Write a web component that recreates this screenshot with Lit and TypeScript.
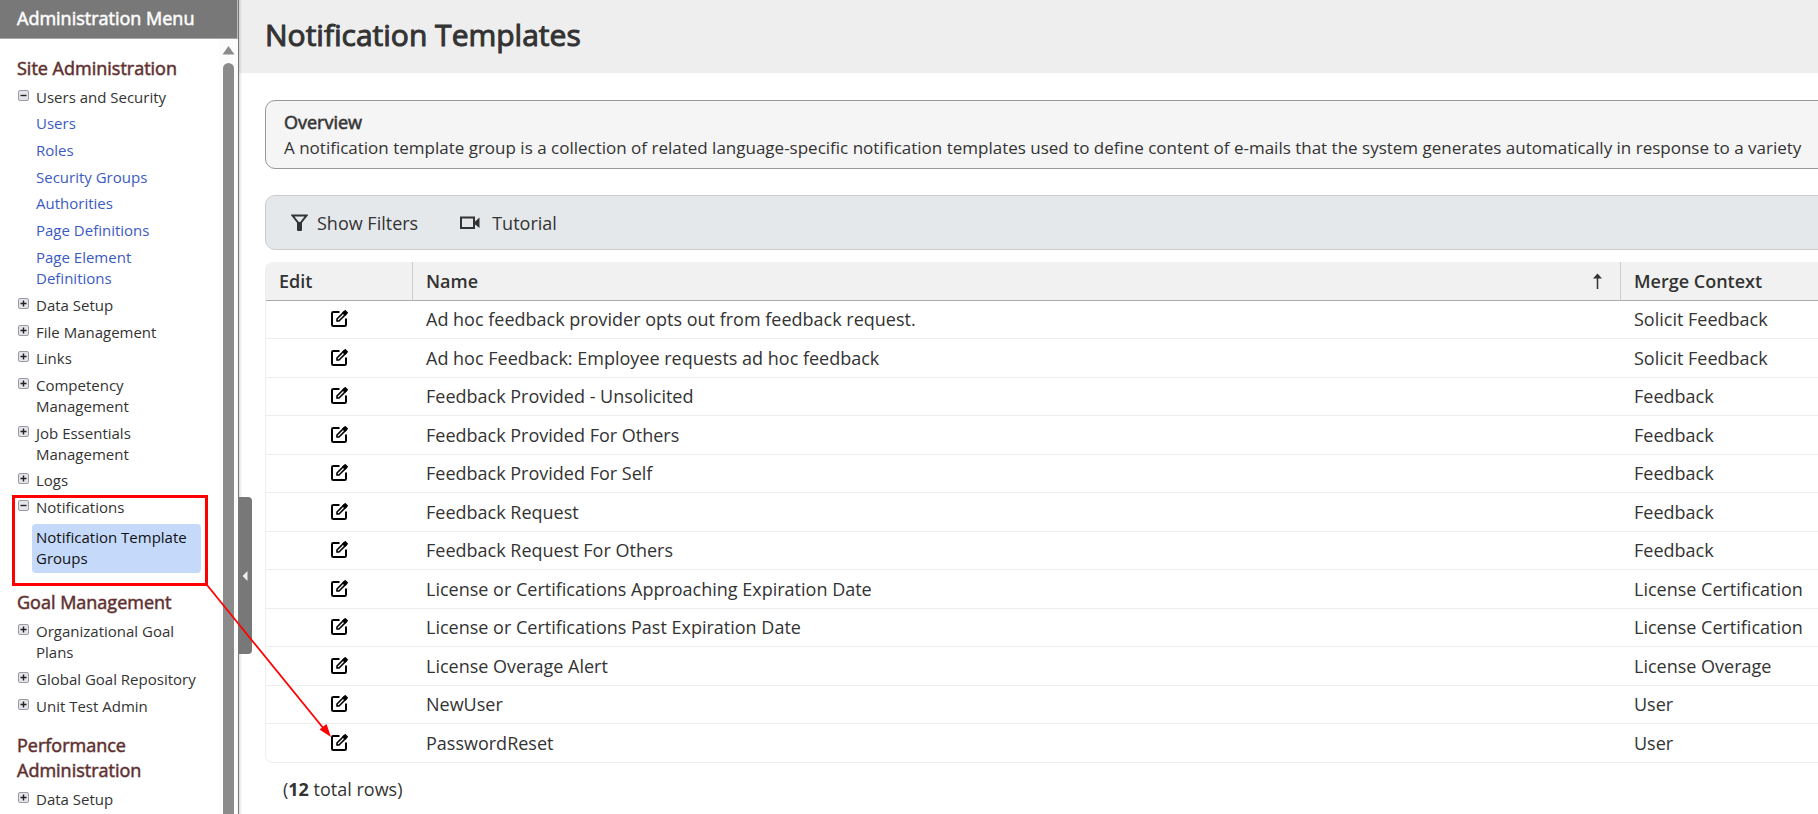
import { LitElement, html, css, svg } from "lit";
import { customElement } from "lit/decorators.js";

interface MenuItem { label: string; open?: boolean; links?: string[]; current?: string; }
interface MenuSection { title: string; items: MenuItem[]; }

const MENU: MenuSection[] = [
  {
    title: "Site Administration",
    items: [
      {
        label: "Users and Security",
        open: true,
        links: ["Users", "Roles", "Security Groups", "Authorities", "Page Definitions", "Page Element Definitions"],
      },
      { label: "Data Setup" },
      { label: "File Management" },
      { label: "Links" },
      { label: "Competency Management" },
      { label: "Job Essentials Management" },
      { label: "Logs" },
      { label: "Notifications", open: true, links: ["Notification Template Groups"], current: "Notification Template Groups" },
    ],
  },
  {
    title: "Goal Management",
    items: [{ label: "Organizational Goal Plans" }, { label: "Global Goal Repository" }, { label: "Unit Test Admin" }],
  },
  { title: "Performance Administration", items: [{ label: "Data Setup" }] },
];

const ROWS: [string, string][] = [
  ["Ad hoc feedback provider opts out from feedback request.", "Solicit Feedback"],
  ["Ad hoc Feedback: Employee requests ad hoc feedback", "Solicit Feedback"],
  ["Feedback Provided - Unsolicited", "Feedback"],
  ["Feedback Provided For Others", "Feedback"],
  ["Feedback Provided For Self", "Feedback"],
  ["Feedback Request", "Feedback"],
  ["Feedback Request For Others", "Feedback"],
  ["License or Certifications Approaching Expiration Date", "License Certification"],
  ["License or Certifications Past Expiration Date", "License Certification"],
  ["License Overage Alert", "License Overage"],
  ["NewUser", "User"],
  ["PasswordReset", "User"],
];

@customElement("admin-menu")
export class AdminMenu extends LitElement {
  static styles = css`
    :host { display: flex; flex-direction: column; min-height: 0; background: #fff; border-right: 1px solid #777; }
    .bar {
      flex: none; height: 39px; box-sizing: border-box; padding: 7px 17px; line-height: 22px;
      background: #787878; color: #fff; font-size: 18px; font-weight: 400; margin: 0;
      border-bottom: 1px solid #a8a8a8; border-right: 1px solid #bbb; -webkit-text-stroke: 1px #ffffff99;
    }
    .body { flex: 1; min-height: 0; display: flex; overflow: hidden; }
    nav { flex: 1; min-width: 0; padding: 17px 14px 0 17px; overflow: hidden; }
    .track { flex: none; width: 19px; padding-top: 7px; display: flex; flex-direction: column; align-items: center; background: #fcfcfc; }
    .track svg { display: block; flex: none; }
    .thumb { width: 11px; flex: 1; margin-top: 8px; border-radius: 6px 6px 0 0; background: #8b8b8b; }
    h2 { margin: 0 0 3px; font-size: 18px; font-weight: 400; line-height: 25px; color: #5c2e2e; -webkit-text-stroke: 1px #5c2e2e88; }
    section + section { padding-top: 14px; }
    ul { list-style: none; margin: 0; padding: 0; }
    .toggle {
      display: grid; grid-template-columns: 12px 1fr; column-gap: 7px; width: 100%; text-align: left;
      border: 0; background: none; padding: 3px 0; font: inherit; color: inherit; line-height: 21px; cursor: pointer;
    }
    .toggle svg { margin: 3px 0 0 1px; }
    .sub { padding: 0 4px 0 15px; }
    a { display: block; padding: 2px 4px 4px; color: #3b5bc4; text-decoration: none; }
    li:nth-child(3n) > .toggle { padding-bottom: 2px; }
    li:nth-child(3n) > a { padding-bottom: 3px; }
    .current { background: #c5dafa; color: #111; border-radius: 4px; margin: 3px 0; padding-top: 3px; }
  `;

  render() {
    return html`
      <h1 class="bar">Administration Menu</h1>
      <div class="body">
        <nav aria-label="Administration">
          ${MENU.map((s) => html`<section>
            <h2>${s.title}</h2>
            <ul>${s.items.map((i) => this.item(i))}</ul>
          </section>`)}
        </nav>
        <div class="track">
          <svg width="13" height="9"><path d="M6.5 0 12.5 8.5H.5Z" fill="#8b8b8b" /></svg>
          <div class="thumb"></div>
        </div>
      </div>`;
  }

  item(i: MenuItem) {
    return html`<li>
      <button class="toggle" aria-expanded=${i.open ? "true" : "false"}>
        <svg width="11" height="11" viewBox="0 0 11 11">
          <rect x=".5" y=".5" width="10" height="10" rx="1.5" fill="#e4e4ea" stroke="#9a9aa2" />
          <path d=${i.open ? "M2.5 5.5h6" : "M2.5 5.5h6M5.5 2.5v6"} stroke="#222" stroke-width="1.4" />
        </svg>
        <span>${i.label}</span>
      </button>
      ${i.links
        ? html`<ul class="sub">${i.links.map((l) => html`<li><a href="#" class=${l === i.current ? "current" : ""}>${l}</a></li>`)}</ul>`
        : ""}
    </li>`;
  }
}

const editIcon = svg`<svg width="17" height="17" viewBox="0 0 17 17" fill="none" stroke="#000">
  <path d="M8.500 2H2.200Q1 2 1 3.200v11.600Q1 16 2.200 16h11.600q1.200 0 1.200-1.200V8.500" stroke-width="2" />
  <path d="M6 11V9L13 2 15 4 8 11Z" stroke-width="1.600" />
  <path d="M12 3 14.200 .8l2 2L14 5Z" fill="#000" stroke-width="1.500" />
</svg>`;

@customElement("template-list")
export class TemplateList extends LitElement {
  static styles = css`
    :host { display: block; min-width: 0; overflow: hidden; }
    header { background: #eee; padding: 15px 26px 18px; }
    h1 { margin: 0; font-size: 30px; font-weight: 400; line-height: 40px; -webkit-text-stroke: 1px #333; }
    .content { padding: 27px 0 0 26px; margin-right: -20px; }
    .overview { border: 1px solid #999; border-radius: 10px; background: #f5f5f5; padding: 9px 18px 8px; white-space: nowrap; overflow: hidden; line-height: 25px; }
    .overview h2 { margin: 0; font-size: 18px; font-weight: 400; -webkit-text-stroke: 1px #33333399; }
    .overview p { margin: 0; font-size: 17px; }
    .tools { margin: 26px 0 12px; height: 53px; border: 1px solid #ccc; border-radius: 10px; background: #e4e8eb; display: flex; align-items: center; gap: 42px; padding: 0 25px; }
    .tools button { display: flex; align-items: center; gap: 9px; border: 0; background: none; padding: 0; font: inherit; color: inherit; }
    .tools .video { gap: 12px; }
    table { width: 100%; table-layout: fixed; border-collapse: separate; border-spacing: 0; border: 1px solid #eee; border-top: 0; border-radius: 8px; overflow: hidden; }
    .c1 { width: 146px; }
    .c3 { width: 217px; }
    th { height: 38px; padding: 0 13px; text-align: left; font-weight: 600; background: #f1f1f1; border-bottom: 1px solid #aaa; }
    th + th { border-left: 1px solid #ccc; }
    .sort { display: flex; justify-content: space-between; align-items: center; padding-right: 4px; }
    td { height: 36px; padding: 0 14px 1px; border-bottom: 1px solid #eee; }
    tr:nth-child(even) td { height: 37px; }
    tbody tr:last-child td { border-bottom: 0; }
    .edit button { border: 0; background: none; padding: 0; display: block; margin: 0 auto 1px; }
    .edit svg { display: block; }
    .total { margin: 14px 18px; line-height: 24px; }
  `;

  render() {
    return html`
      <header><h1>Notification Templates</h1></header>
      <div class="content">
        <div class="overview">
          <h2>Overview</h2>
          <p>A notification template group is a collection of related language-specific notification templates used to define content of e-mails that the system generates automatically in response to a variety</p>
        </div>
        <div class="tools">
          <button>
            <svg width="17" height="17" viewBox="0 0 17 17"><path d="M1.500 1.500H15.500L10 8.500V15.500H7V8.500Z" fill="none" stroke="#333" stroke-width="2" /><path d="M6.500 8h4v9H6.500Z" fill="#333" /></svg>
            Show Filters
          </button>
          <button class="video">
            <svg width="20" height="14" viewBox="0 0 20 14"><rect x="1" y="1.500" width="13" height="10.500" fill="none" stroke="#333" stroke-width="2" /><path d="M14.500 6 19.500 1.500V12L14.500 8Z" fill="#333" /></svg>
            Tutorial
          </button>
        </div>
        <table>
          <colgroup><col class="c1" /><col /><col class="c3" /></colgroup>
          <thead>
            <tr>
              <th scope="col">Edit</th>
              <th scope="col" aria-sort="ascending">
                <span class="sort">Name
                  <svg width="11" height="17" viewBox="0 0 11 17"><path d="M5.500 3v13" stroke="#333" stroke-width="1.500" /><path d="M5.500.500 10 5.500H1Z" fill="#333" /></svg>
                </span>
              </th>
              <th scope="col">Merge Context</th>
            </tr>
          </thead>
          <tbody>
            ${ROWS.map(([name, ctx]) => html`<tr>
              <td class="edit"><button aria-label="Edit ${name}">${editIcon}</button></td>
              <td>${name}</td>
              <td>${ctx}</td>
            </tr>`)}
          </tbody>
        </table>
        <p class="total">(<b>12</b> total rows)</p>
      </div>`;
  }
}

@customElement("app-root")
export class AppRoot extends LitElement {
  static styles = css`
    :host { display: grid; grid-template-columns: 239px minmax(0, 1fr); height: 100vh; overflow: hidden; position: relative; background: #fff; color: #333; font-family: "Open Sans", "Noto Sans", sans-serif; font-size: 18px; }
    admin-menu { font-size: 15px; line-height: 21px; }
    .shade { position: absolute; left: 239px; top: 0; bottom: 0; width: 3px; background: linear-gradient(90deg, #0002, #0000); }
    .collapse { position: absolute; left: 238px; top: 497px; width: 14px; height: 157px; padding: 0; border: 0; border-radius: 0 4px 4px 0; background: #787878; display: grid; place-items: center; }
    .callout { position: absolute; left: 12px; top: 495px; pointer-events: none; }
  `;

  render() {
    return html`
      <admin-menu></admin-menu>
      <template-list></template-list>
      <div class="shade"></div>
      <button class="collapse" aria-label="Collapse menu">
        <svg width="6" height="10"><path d="M5.500 0V10L.500 5Z" fill="#eee" /></svg>
      </button>
      <svg class="callout" width="325" height="245" fill="none">
        <rect x="1.500" y="1.500" width="193" height="88" stroke="#f00" stroke-width="3" />
        <path d="M195 90 312 234" stroke="#f00" stroke-width="1.800" />
        <path d="M319 242 307.500 234.500 314.500 229Z" fill="#f00" />
      </svg>`;
  }
}
